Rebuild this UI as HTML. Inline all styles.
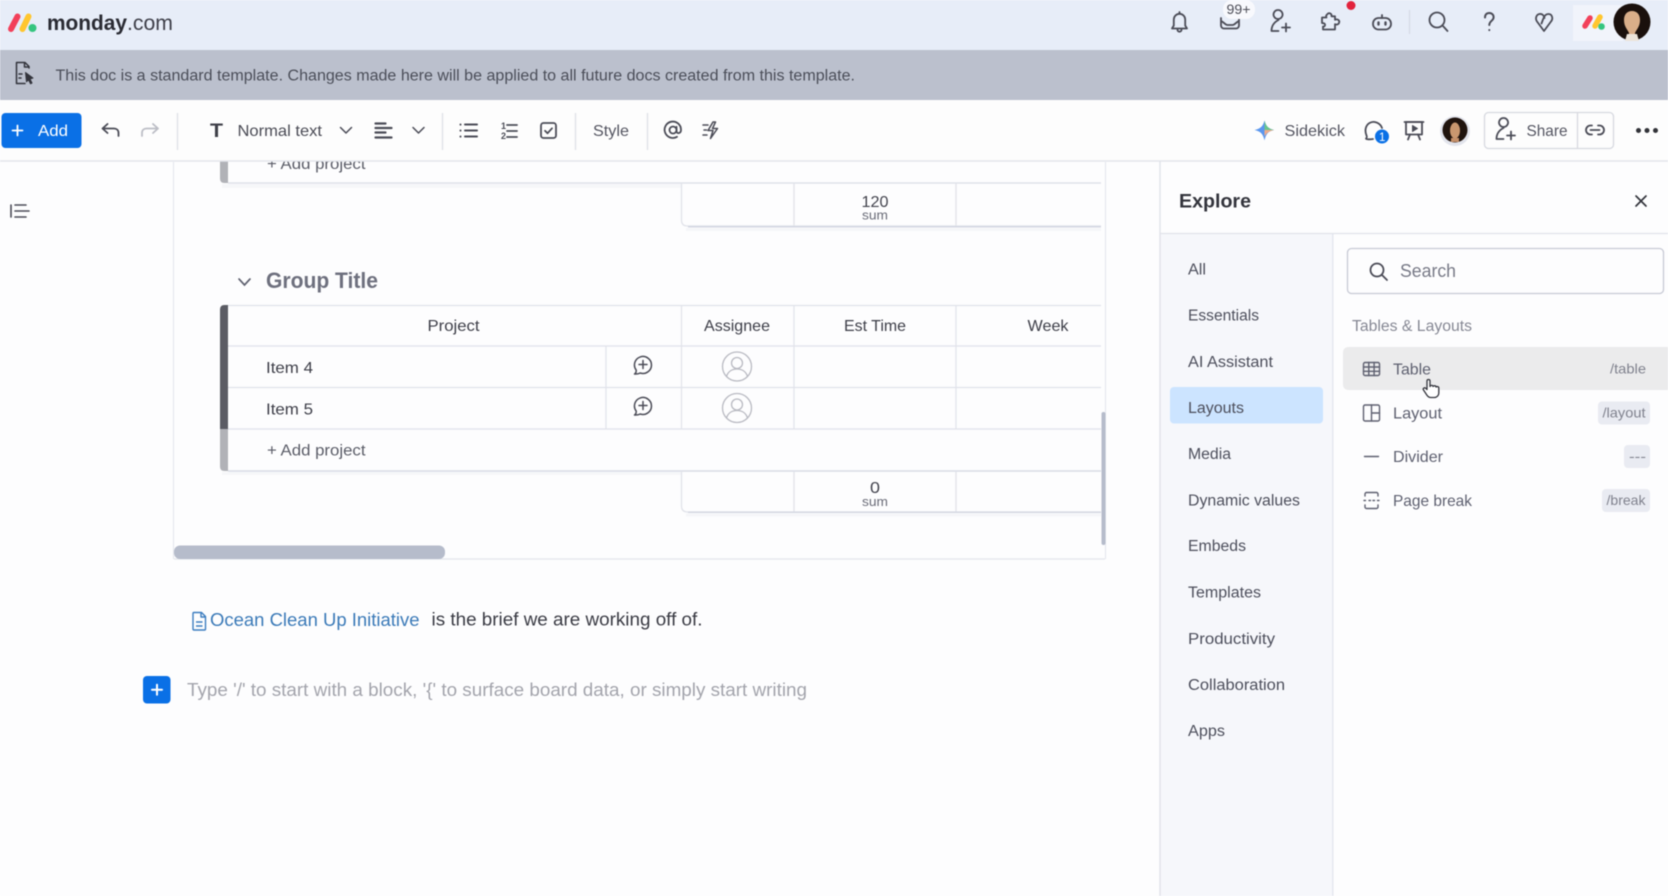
<!DOCTYPE html>
<html lang="en">
<head>
<meta charset="utf-8">
<title>monday.com doc</title>
<style>
html,body{margin:0;padding:0;width:1668px;height:896px;overflow:hidden;background:#fdfdfe}
svg{display:block;filter:blur(.45px)}
text{font-family:"Liberation Sans",sans-serif;white-space:pre}
.ic{fill:none;stroke:#4b4c57;stroke-width:1.8;stroke-linecap:round;stroke-linejoin:round}
.nav{font-size:15.5px;fill:#4d4f5c}
.g{fill:#5e6070}
</style>
</head>
<body>
<svg width="1668" height="896" viewBox="0 0 1668 896" xmlns="http://www.w3.org/2000/svg">
<rect width="1668" height="896" fill="#fdfdfe"/>

<!-- top bar -->
<rect width="1668" height="50" fill="#e7edf8"/>
<g stroke-linecap="round" stroke-width="6" fill="none">
<path d="M11 29 17.5 16.500" stroke="#f2405a"/>
<path d="M22.500 29 28.500 16.500" stroke="#ffc62e"/>
</g>
<circle cx="32.500" cy="28" r="4" fill="#35c57f"/>
<text x="47" y="30" font-size="21" font-weight="700" fill="#2a2b33" textLength="80" lengthAdjust="spacingAndGlyphs">monday</text>
<text x="127" y="30" font-size="21" fill="#3f404a" textLength="46" lengthAdjust="spacingAndGlyphs">.com</text>

<!-- top right icons -->
<g class="ic">
<path d="M1172 28.500h15l-1.800-3v-6a5.700 5.700 0 0 0-11.400 0v6zM1177.500 28.500v1.200a2 2 0 0 0 4 0v-1.200M1179.500 13.200v-1.200"/>
<path d="M1221 18v7.500a3 3 0 0 0 3 3h12a3 3 0 0 0 3-3V18M1221 21c3 1 4 4 6.500 4h5c2.500 0 3.500-3 6.500-4"/>
<path d="M1278 19a4.500 4.500 0 1 1 .1 0M1271.500 31c0-6 3-9 7-11M1271.500 31h7M1282 27.500h8M1286 23.500v8"/>
<path d="M1327 14.500c2-2.500 5-1 4.500 1.800h3.500v3.500c3-1.300 5 1 4 3.200-.5 1.300-2 2-4 1.200v5.300h-12v-3c2.500.5 3-3.500 0-3.300l-1-.2v-5.500h4.500c-.7-1-.5-2 .5-3z"/>
<rect x="1373" y="18" width="18" height="11.500" rx="5.500"/>
<path d="M1382 18v-3"/>
<path d="M1378.500 22.500v2M1385.500 22.500v2" style="stroke-width:2.400"/>
<circle cx="1437" cy="20" r="7.500"/>
<path d="M1442.500 25.500l5 5.500"/>
<path d="M1485 17.500c0-3 1.800-4.500 4.300-4.500s4.300 1.800 4.300 4.200c0 3.500-4.300 3.800-4.300 7.800M1489.300 30v.1" style="stroke-width:2"/>
<path d="M1544 31 1537 21.500c-2-3-.8-7 2.500-7.500 2.800-.4 4.500 1.500 5 4M1544 31l7-9.500c2.500-3 1-7.500-2.500-7.500-2.500 0-4.500 2-5.500 5.500l-1.500 4"/>
</g>
<rect x="1223" y="0" width="32" height="19" rx="9" fill="#f8f9fd"/>
<text x="1226.500" y="14" font-size="14" fill="#4d4e58" textLength="24" lengthAdjust="spacingAndGlyphs">99+</text>
<circle cx="1351" cy="5.500" r="4.500" fill="#e2233d"/>
<path d="M1409.500 10v24" stroke="#d5dae6" stroke-width="1.300"/>
<rect x="1573" y="5" width="50" height="36" fill="#f1f4fb"/>
<g stroke-linecap="round" stroke-width="5.500" fill="none">
<path d="M1585 26 1590 18" stroke="#f2405a"/>
<path d="M1595 26 1600 17" stroke="#ffc62e"/>
</g>
<circle cx="1601.500" cy="26.500" r="3.300" fill="#35c57f"/>
<circle cx="1632" cy="22" r="18.500" fill="#1a100c"/>
<path d="M1624 20c0-6 3.500-9 8-9s8 3 8 9c0 7-4 10-5 13v8h-6v-8c-1-3-5-6-5-13z" fill="#d9ae89"/>
<path d="M1627 34l-2 7h14l-2-7z" fill="#ece4da"/>

<!-- banner -->
<rect y="50" width="1668" height="50" fill="#bbc0cd"/>
<g fill="none" stroke="#33343c" stroke-width="1.500" stroke-linejoin="round" stroke-linecap="round">
<path d="M29 68v-1.500l-4-4H16.500v21H25M24.500 62.500v4.500H29M19 74h3M19 78h2"/>
<path d="M25.500 72.500 33 78l-3 1 2 4-1.500.8-2-4-2 2z" fill="#33343c" stroke-width="1"/>
</g>
<text x="55.500" y="80.500" font-size="15.500" fill="#4b4e59" textLength="799.500" lengthAdjust="spacingAndGlyphs">This doc is a standard template. Changes made here will be applied to all future docs created from this template.</text>

<!-- toolbar -->
<rect y="100" width="1668" height="61" fill="#fdfdfd"/>
<rect x="1.500" y="113" width="80" height="35" rx="4" fill="#0a70e6"/>
<path d="M12.500 130.500h10M17.500 125.500v10" stroke="#fff" stroke-width="1.800" stroke-linecap="round"/>
<text x="38" y="136" font-size="16" fill="#fff" textLength="30" lengthAdjust="spacingAndGlyphs">Add</text>
<g class="ic">
<path d="M118.500 136v-3c0-3-2-4.500-4.500-4.500h-11M107.500 124l-5 4.500 5 4.500"/>
<path d="M142 136v-3c0-3 2-4.500 4.500-4.500h11M153 124l5 4.500-5 4.500" style="stroke:#bcbec6"/>
</g>
<path d="M177.500 113v37M442.500 113v37M575.500 113v37M647.500 113v37" stroke="#dfe1e7" stroke-width="1.300"/>
<text x="210" y="137" font-size="19" font-weight="700" fill="#3f4049" textLength="13" lengthAdjust="spacingAndGlyphs">T</text>
<text x="237.500" y="136" font-size="16" fill="#4a4b55" textLength="84.500" lengthAdjust="spacingAndGlyphs">Normal text</text>
<g class="ic">
<path d="M340.500 127.500l5.500 5.500 5.500-5.500M413 127.500l5.500 5.500 5.500-5.500" style="stroke-width:1.500"/>
<path d="M375.500 123.500h10M375.500 128h16M375.500 132.500h10M375.500 137.500h16" style="stroke-width:2.200"/>
<path d="M465 124.500h12M465 130.500h12M465 136.500h12M460.500 124.500v.1M460.500 130.500v.1M460.500 136.500v.1" style="stroke-width:2"/>
<path d="M507 125h10M507 131h10M507 137h10"/>
<rect x="541" y="123" width="15" height="15" rx="2.500"/>
<path d="M545 130.800l2.500 2.500 4.500-5"/>
<circle cx="673" cy="130" r="3.500"/>
<path d="M676.500 126.800v4.200c0 3 4.500 3 4.500-1.200a8.200 8.200 0 1 0-4 7"/>
<path d="M713 122l-5 8.500h5l-2.500 8 7-10h-5l3-6.500zM703 125h5M704 130h2.500M703 135h4" style="stroke-width:1.500"/>
</g>
<text x="501" y="129" font-size="9" font-weight="700" fill="#4b4c57">1</text>
<text x="501" y="139" font-size="9" font-weight="700" fill="#4b4c57">2</text>
<text x="593" y="136" font-size="16" fill="#545561" textLength="36" lengthAdjust="spacingAndGlyphs">Style</text>

<!-- sidekick -->
<path d="M1264.500 120.500c1.500 5.500 3.500 8 9.500 9.500-6 1.500-8 4-9.500 10.500-1.500-6.500-3.500-9-10-10.500 6.500-1.500 8.500-4 10-9.500z" fill="#5b97ee"/>
<path d="M1264.500 120.500c1.500 5.500 3.500 8 9.500 9.500h-9.500z" fill="#68c58e"/>
<path d="M1264.500 130h9.500c-6 1.500-8 4-9.500 6.500z" fill="#f0ab8a"/>
<text x="1284.500" y="136" font-size="16" fill="#545561" textLength="60.500" lengthAdjust="spacingAndGlyphs">Sidekick</text>
<g class="ic">
<path d="M1373 139c-3 .5-7 .5-7-.5 1-1 1.200-1.500.5-3-2-5-1-10 3-12.500 5-3 11 .5 12.500 5"/>
<rect x="1406" y="122" width="16" height="12.500"/>
<path d="M1404.500 122h19M1410 134.500l-2 5M1418 134.500l2 5"/>
<path d="M1412.500 125.500l5 3-5 3z" style="fill:#4b4c57;stroke-width:1"/>
</g>
<circle cx="1382" cy="136.500" r="7" fill="#0a70e6"/>
<text x="1379" y="141" font-size="11.500" fill="#fff">1</text>
<circle cx="1455" cy="131" r="15" fill="#e2e4ec"/>
<circle cx="1455" cy="130" r="12.500" fill="#20140e"/>
<ellipse cx="1455" cy="130.500" rx="5" ry="8" fill="#c9976f"/>
<path d="M1451 138h8v4h-8z" fill="#c48f69"/>

<rect x="1484.500" y="112.500" width="129" height="36" rx="4" fill="#fdfdfd" stroke="#d7d9e0" stroke-width="1.300"/>
<path d="M1577.500 113v35" stroke="#d7d9e0" stroke-width="1.300"/>
<g class="ic">
<path d="M1503.500 127a4.500 4.500 0 1 1 .1 0M1496.500 139c0-6 3-9 7-11M1496.500 139h7M1507 135.500h8M1511 131.500v8"/>
<path d="M1592 125.500h-1.500a4.500 4.500 0 0 0 0 9h1.500M1598 125.500h1.500a4.500 4.500 0 0 1 0 9h-1.500M1590.500 130h9"/>
</g>
<text x="1526.500" y="136" font-size="16" fill="#545561" textLength="41" lengthAdjust="spacingAndGlyphs">Share</text>
<circle cx="1638.500" cy="130.500" r="2.500" fill="#323338"/>
<circle cx="1647" cy="130.500" r="2.500" fill="#323338"/>
<circle cx="1655.500" cy="130.500" r="2.500" fill="#323338"/>

<!-- outline icon -->
<g class="ic"><path d="M11 205v12M15 205h11M15 211h14M15 217h11" style="stroke-width:1.600"/></g>

<!-- doc frame -->
<path d="M173.500 162v397" stroke="#e7e8ee" stroke-width="1.200"/>
<path d="M1105.500 162v397" stroke="#e7e8ee" stroke-width="1.200"/>
<path d="M174 559h931" stroke="#e4e6ec" stroke-width="1.300"/>

<!-- table 1 remainder -->
<path d="M220 158h8v25h-3.500q-4.500 0-4.500-4.500z" fill="#b1b2b7"/>
<rect x="222" y="184" width="459" height="4" fill="#f6f7f9"/>
<path d="M228 183h873" stroke="#dfe1e9" stroke-width="1.600"/>
<text x="267" y="169" font-size="15.500" fill="#5b5d68" textLength="98.500" lengthAdjust="spacingAndGlyphs">+ Add project</text>
<rect x="0" y="150" width="1668" height="11" fill="#fdfdfd"/>
<path d="M0 161h1668" stroke="#e4e6ec" stroke-width="1.500"/>
<path d="M681.500 183v37q0 6 6 6H1101M794 183v43M956 183v43" fill="none" stroke="#e1e3ea" stroke-width="1.300"/>
<path d="M688 226.800h413" stroke="#d4d7e2" stroke-width="1.500"/>
<rect x="686" y="228" width="415" height="3" fill="#f5f6f9"/>
<text x="861.500" y="207" font-size="16" fill="#43444e" textLength="27" lengthAdjust="spacingAndGlyphs">120</text>
<text x="862" y="219.500" font-size="12.500" fill="#6a6c78" textLength="26" lengthAdjust="spacingAndGlyphs">sum</text>

<!-- group -->
<path d="M239 279l5.500 6 5.500-6" fill="none" stroke="#5f6170" stroke-width="1.700" stroke-linecap="round"/>
<text x="266" y="288" font-size="22" font-weight="700" fill="#6e707e" textLength="112" lengthAdjust="spacingAndGlyphs">Group Title</text>

<path d="M220 428.500h8V471h-3.500q-4.500 0-4.500-4.500z" fill="#b1b2b7"/>
<path d="M228 305h-3.500q-4.500 0-4.500 4.500V429h8z" fill="#5b5c64"/>
<path d="M228 305.500h873M228 346h873M228 387.500h873M228 429h873" stroke="#e0e2ea" stroke-width="1.300"/>
<path d="M228 471h873" stroke="#d8dbe5" stroke-width="1.600"/>
<rect x="222" y="472" width="459" height="3" fill="#f6f7f9"/>
<path d="M606 346v83M681.500 305v124M794 305v124M956 305v124" stroke="#e1e3ea" stroke-width="1.200"/>
<text x="427.500" y="331" font-size="16" fill="#3d3e48" textLength="52" lengthAdjust="spacingAndGlyphs">Project</text>
<text x="704" y="331" font-size="16" fill="#3d3e48" textLength="66" lengthAdjust="spacingAndGlyphs">Assignee</text>
<text x="844" y="331" font-size="16" fill="#3d3e48" textLength="62" lengthAdjust="spacingAndGlyphs">Est Time</text>
<text x="1027.500" y="331" font-size="16" fill="#3d3e48" textLength="41" lengthAdjust="spacingAndGlyphs">Week</text>
<text x="266" y="373" font-size="16" fill="#3d3e48" textLength="47" lengthAdjust="spacingAndGlyphs">Item 4</text>
<text x="266" y="414.500" font-size="16" fill="#3d3e48" textLength="47" lengthAdjust="spacingAndGlyphs">Item 5</text>
<g class="ic" style="stroke-width:1.500">
<path d="M634.500 374c1.200-.8 1.800-2 1.700-3.900A8.500 8.500 0 1 1 640.200 373c-1.800.9-3.700 1.200-5.700 1zM643 360.500v8M639 364.500h8"/>
<path d="M634.500 415c1.200-.8 1.800-2 1.700-3.900A8.500 8.500 0 1 1 640.200 414c-1.800.9-3.700 1.200-5.700 1zM643 401.500v8M639 405.500h8"/>
</g>
<g fill="none" stroke="#b9bac2" stroke-width="1.300">
<circle cx="737" cy="366.500" r="14.500"/>
<circle cx="737" cy="363" r="5.500"/>
<path d="M726.500 376.500c1.500-5 5.500-7.500 10.500-7.500s9 2.500 10.500 7.500"/>
<circle cx="737" cy="408" r="14.500"/>
<circle cx="737" cy="404.500" r="5.500"/>
<path d="M726.500 418c1.500-5 5.500-7.500 10.500-7.500s9 2.500 10.500 7.500"/>
</g>
<text x="267" y="455.500" font-size="15.500" fill="#5b5d68" textLength="98.500" lengthAdjust="spacingAndGlyphs">+ Add project</text>
<path d="M681.500 471v35q0 6 6 6H1101M794 471v41M956 471v41" fill="none" stroke="#e1e3ea" stroke-width="1.300"/>
<path d="M688 512.300h413" stroke="#d4d7e2" stroke-width="1.500"/>
<rect x="686" y="513.500" width="415" height="3" fill="#f5f6f9"/>
<text x="870" y="493" font-size="16" fill="#43444e" textLength="10" lengthAdjust="spacingAndGlyphs">0</text>
<text x="862" y="506" font-size="12.500" fill="#6a6c78" textLength="26" lengthAdjust="spacingAndGlyphs">sum</text>

<rect x="1101.500" y="412" width="4" height="133" rx="2" fill="#b6bccb"/>
<rect x="174" y="545.500" width="271" height="13.500" rx="6" fill="#b6bccb"/>

<!-- paragraph -->
<path d="M194 612.500h7.500l4 4v12.500a1 1 0 0 1-1 1h-10.500a1 1 0 0 1-1-1v-15.500a1 1 0 0 1 1-1zM201 612.500v4.500h4.500M196 622h6.500M196 626h6.500" fill="none" stroke="#3c7dc0" stroke-width="1.400" stroke-linejoin="round"/>
<text x="210" y="626" font-size="18" fill="#3b7ab8" textLength="209.500" lengthAdjust="spacingAndGlyphs">Ocean Clean Up Initiative</text>
<text x="431.500" y="625.500" font-size="18" fill="#3a3b44" textLength="271" lengthAdjust="spacingAndGlyphs">is the brief we are working off of.</text>
<rect x="143" y="676" width="27.500" height="27.500" rx="4" fill="#0a70e6"/>
<path d="M152 689.800h10M157 684.800v10" stroke="#fff" stroke-width="2" stroke-linecap="round"/>
<text x="187" y="696" font-size="18" fill="#a3a4ac" textLength="620" lengthAdjust="spacingAndGlyphs">Type '/' to start with a block, '{' to surface board data, or simply start writing</text>

<!-- explore panel -->
<rect x="1160" y="162" width="508" height="734" fill="#fdfdfe"/>
<rect x="1160" y="234" width="173" height="662" fill="#f6f7fb"/>
<path d="M1160 161v735" stroke="#dfe1e8" stroke-width="1.300"/>
<path d="M1160 233.500h508" stroke="#e1e3ea" stroke-width="1.300"/>
<path d="M1332.800 234v662" stroke="#e3e5ee" stroke-width="1.300"/>
<text x="1179" y="207.500" font-size="19" font-weight="700" fill="#33343c" textLength="72" lengthAdjust="spacingAndGlyphs">Explore</text>
<path d="M1636 196l10 10M1646 196l-10 10" stroke="#33343c" stroke-width="1.700" stroke-linecap="round"/>

<rect x="1170" y="387" width="153" height="36.500" rx="4" fill="#cce4ff"/>
<text class="nav" x="1188" y="274.500" textLength="18" lengthAdjust="spacingAndGlyphs">All</text>
<text class="nav" x="1188" y="320.500" textLength="71" lengthAdjust="spacingAndGlyphs">Essentials</text>
<text class="nav" x="1188" y="367" textLength="85" lengthAdjust="spacingAndGlyphs">AI Assistant</text>
<text class="nav" x="1188" y="413" textLength="56" lengthAdjust="spacingAndGlyphs">Layouts</text>
<text class="nav" x="1188" y="459" textLength="43" lengthAdjust="spacingAndGlyphs">Media</text>
<text class="nav" x="1188" y="505.500" textLength="112" lengthAdjust="spacingAndGlyphs">Dynamic values</text>
<text class="nav" x="1188" y="551" textLength="58" lengthAdjust="spacingAndGlyphs">Embeds</text>
<text class="nav" x="1188" y="597.500" textLength="73" lengthAdjust="spacingAndGlyphs">Templates</text>
<text class="nav" x="1188" y="644" textLength="87" lengthAdjust="spacingAndGlyphs">Productivity</text>
<text class="nav" x="1188" y="690" textLength="97" lengthAdjust="spacingAndGlyphs">Collaboration</text>
<text class="nav" x="1188" y="736" textLength="37" lengthAdjust="spacingAndGlyphs">Apps</text>

<rect x="1347.500" y="248.500" width="316" height="45" rx="4" fill="#fdfdfe" stroke="#c8cad5" stroke-width="1.300"/>
<g class="ic"><circle cx="1377" cy="270" r="6.500"/><path d="M1382 275l5 5"/></g>
<text x="1400" y="277" font-size="18" fill="#787a87" textLength="56" lengthAdjust="spacingAndGlyphs">Search</text>
<text x="1352" y="331" font-size="15.500" fill="#868894" textLength="120" lengthAdjust="spacingAndGlyphs">Tables &amp; Layouts</text>

<path d="M1668 347h-319q-6 0-6 6v31q0 6 6 6h319z" fill="#ebebec"/>
<g class="ic" style="stroke:#5e6070;stroke-width:1.400">
<rect x="1363.500" y="362.500" width="16" height="13" rx="1.500"/>
<path d="M1363.500 367h16M1363.500 371.300h16M1368.800 362.500v13M1374.100 362.500v13"/>
<rect x="1363.500" y="405" width="16" height="16" rx="1.500"/>
<path d="M1371.500 405v16M1371.500 413h8"/>
<path d="M1364.500 456.500h14"/>
<path d="M1365 496v-2a1.500 1.500 0 0 1 1.500-1.500h10a1.500 1.500 0 0 1 1.500 1.500v2M1365 505v2a1.500 1.500 0 0 0 1.500 1.500h10a1.500 1.500 0 0 0 1.500-1.500v-2M1364 500.500h1.500M1369 500.500h1.500M1373 500.500h1.500M1377.500 500.500h1.500"/>
</g>
<text class="g" x="1393" y="374.500" font-size="16" textLength="38" lengthAdjust="spacingAndGlyphs">Table</text>
<text class="g" x="1393" y="418.500" font-size="16" textLength="49" lengthAdjust="spacingAndGlyphs">Layout</text>
<text class="g" x="1393" y="462" font-size="16" textLength="50" lengthAdjust="spacingAndGlyphs">Divider</text>
<text class="g" x="1393" y="506" font-size="16" textLength="79" lengthAdjust="spacingAndGlyphs">Page break</text>
<rect x="1598" y="401.500" width="52" height="23" rx="4" fill="#e9ebf2"/>
<rect x="1624" y="445" width="26" height="23" rx="4" fill="#e9ebf2"/>
<rect x="1602" y="489" width="48" height="23" rx="4" fill="#e9ebf2"/>
<text x="1610" y="373.500" font-size="14" fill="#80828e" textLength="36" lengthAdjust="spacingAndGlyphs">/table</text>
<text x="1602.500" y="417.500" font-size="14" fill="#80828e" textLength="43" lengthAdjust="spacingAndGlyphs">/layout</text>
<text x="1629" y="461" font-size="14" fill="#80828e" textLength="17" lengthAdjust="spacingAndGlyphs">---</text>
<text x="1606.500" y="505" font-size="14" fill="#80828e" textLength="39" lengthAdjust="spacingAndGlyphs">/break</text>

<!-- cursor -->
<path d="M1427 381c0-2 3-2 3 0v5.500c.5-1.500 3-1.500 3 0 .5-1 3-1 3 .5.8-.8 2.800-.5 2.800 1v5c0 2.500-2 4.500-4.500 4.500h-3.500c-2 0-3-1-4-2.500l-3.300-5c-1-1.800 1.200-3 2.500-1.500l1 1z" fill="#fff" stroke="#33343c" stroke-width="1.300" stroke-linejoin="round"/>
</svg>
</body>
</html>
